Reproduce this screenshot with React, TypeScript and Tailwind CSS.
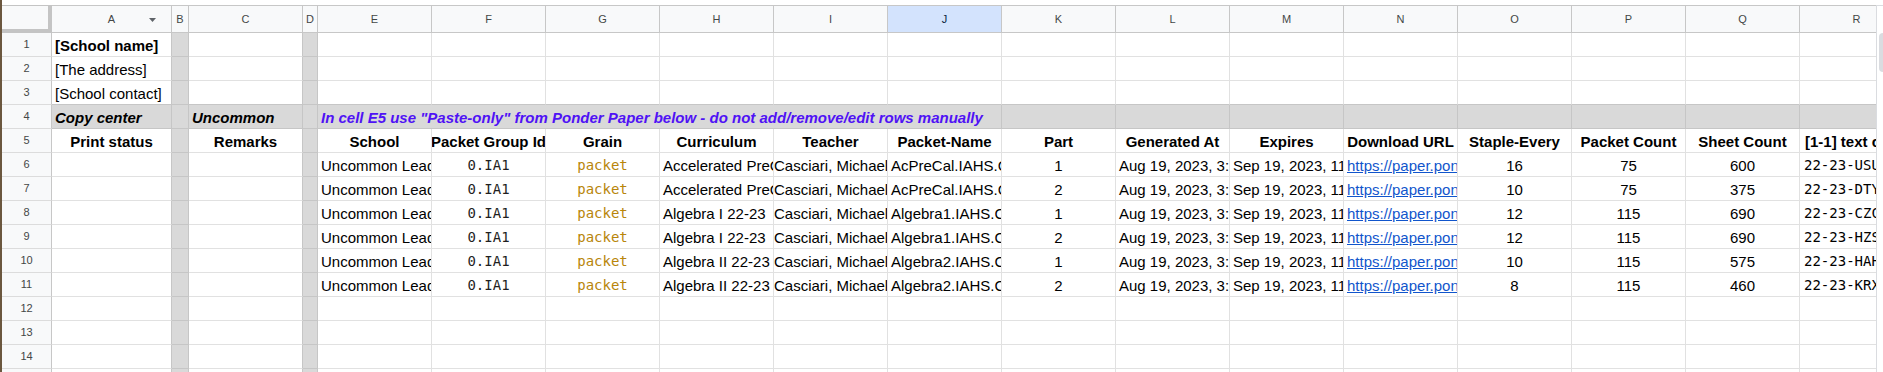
import React from "react";

type Col = { id: string; w: string; gray?: boolean; rb?: string };

const COLS: Col[] = [
  { id: "A", w: "w-[120px]", rb: "border-r-[#c6c6c6]" },
  { id: "B", w: "w-[17px]", gray: true },
  { id: "C", w: "w-[114px]", rb: "border-r-[#c6c6c6]" },
  { id: "D", w: "w-[15px]", gray: true },
  ...["E", "F", "G", "H", "I", "J", "K", "L", "M", "N", "O", "P", "Q", "R"].map((id) => ({ id, w: "w-[114px]" })),
];

type Cell = { v: React.ReactNode; c?: string; center?: boolean; span?: number; w?: string; pl?: string };

const MONO = "font-['DejaVu_Sans_Mono',monospace] text-[14px]";

const head = (v: string): Cell => ({ v, center: true, c: "font-bold" });
const center = (v: string): Cell => ({ v, center: true });
const text = (v: string, pl?: string): Cell => ({ v, pl });

const DATA = [
  ["Accelerated PreCalculus 22-23", "AcPreCal.IAHS.Casciari.1", "1", "16", "75", "600", "22-23-USU7KQ"],
  ["Accelerated PreCalculus 22-23", "AcPreCal.IAHS.Casciari.2", "2", "10", "75", "375", "22-23-DTY4MB"],
  ["Algebra I 22-23", "Algebra1.IAHS.Casciari.1", "1", "12", "115", "690", "22-23-CZC9RT"],
  ["Algebra I 22-23", "Algebra1.IAHS.Casciari.2", "2", "12", "115", "690", "22-23-HZS2WP"],
  ["Algebra II 22-23", "Algebra2.IAHS.Casciari.1", "1", "10", "115", "575", "22-23-HAH8LN"],
  ["Algebra II 22-23", "Algebra2.IAHS.Casciari.2", "2", "8", "115", "460", "22-23-KRX5VD"],
];

const ROWS: Record<string, Cell>[] = [
  { A: { v: "[School name]", c: "font-bold" } },
  { A: text("[The address]") },
  { A: text("[School contact]") },
  {
    A: { v: "Copy center", c: "font-bold italic" },
    C: { v: "Uncommon", c: "font-bold italic" },
    E: {
      v: 'In cell E5 use "Paste-only" from Ponder Paper below - do not add/remove/edit rows manually',
      c: "font-bold italic text-[#4f12f5]",
      span: 6,
      w: "w-[684px]",
    },
  },
  {
    A: head("Print status"),
    C: head("Remarks"),
    E: head("School"),
    F: head("Packet Group Id"),
    G: head("Grain"),
    H: head("Curriculum"),
    I: head("Teacher"),
    J: head("Packet-Name"),
    K: head("Part"),
    L: head("Generated At"),
    M: head("Expires"),
    N: head("Download URL"),
    O: head("Staple-Every"),
    P: head("Packet Count"),
    Q: head("Sheet Count"),
    R: { v: "[1-1] text content", c: "font-bold", pl: "pl-[5px]" },
  },
  ...DATA.map(([cur, name, part, staple, packets, sheets, code]) => ({
    E: text("Uncommon Leadership Charter High School"),
    F: { v: "0.IA1", center: true, c: `${MONO} text-[#1f1f1f]` },
    G: { v: "packet", center: true, c: `${MONO} text-[#b8860b]` },
    H: text(cur),
    I: text("Casciari, Michael", "pl-0"),
    J: text(name),
    K: center(part),
    L: text("Aug 19, 2023, 3:27:41 PM"),
    M: text("Sep 19, 2023, 11:59:59 PM"),
    N: { v: "https://paper.ponder.org/download/" + name, c: "text-[#1155cc] underline" },
    O: center(staple),
    P: center(packets),
    Q: center(sheets),
    R: { v: code, c: MONO, pl: "pl-[4px]" },
  })),
  {},
  {},
  {},
  {},
];

function ColumnHeader() {
  return (
    <div className="flex h-[28px] shrink-0">
      <div className="w-[50px] shrink-0 bg-[#f8f9fa] border-t border-r-4 border-b-4 border-[#c4c4c4]" />
      {COLS.map((col) => (
        <div
          key={col.id}
          className={`${col.w} relative shrink-0 flex items-center justify-center border-t border-b border-r border-[#c7c7c7] text-[11px] ${
            col.id === "J" ? "bg-[#d3e3fd] text-[#0b1f3f]" : "bg-[#f8f9fa] text-[#444746]"
          }`}
        >
          {col.id}
          {col.id === "A" && (
            <svg className="absolute right-[15px] top-[12px]" width="7" height="4" viewBox="0 0 7 4">
              <path d="M0 0h7L3.5 4z" fill="#5f6368" />
            </svg>
          )}
        </div>
      ))}
    </div>
  );
}

function Row({ n, cells }: { n: number; cells: Record<string, Cell> }) {
  const grayRow = n === 4;
  const out: React.ReactNode[] = [];
  for (let i = 0; i < COLS.length; i++) {
    const col = COLS[i];
    const cell = cells[col.id];
    if (cell?.span) i += cell.span - 1;
    const gray = grayRow || col.gray;
    const bottom = gray || n === 3 ? "border-b-[#c6c6c6]" : "border-b-[#e1e1e1]";
    const right = gray ? "border-r-[#c6c6c6]" : col.rb ?? "border-r-[#e1e1e1]";
    out.push(
      <div
        key={col.id}
        className={`${cell?.w ?? col.w} shrink-0 h-full flex items-end overflow-hidden whitespace-nowrap border-r border-b pb-[2px] ${right} ${bottom} ${
          gray ? "bg-[#d9d9d9]" : "bg-white"
        } ${cell?.center ? "justify-center" : cell?.pl ?? "pl-[3px]"}`}
      >
        {cell && <span className={`leading-[17px] ${cell.c ?? ""}`}>{cell.v}</span>}
      </div>
    );
  }
  return (
    <div className="flex h-[24px] shrink-0 text-[15px] text-black">
      <div className="w-[50px] shrink-0 flex items-center justify-center bg-[#f8f9fa] border-r border-b border-r-[#c7c7c7] border-b-[#dcdcdc] text-[11px] text-[#444746]">
        {n}
      </div>
      {out}
    </div>
  );
}

export default function App() {
  return (
    <div className="w-[1883px] h-[372px] overflow-hidden bg-white flex font-['Liberation_Sans',Arial,sans-serif]">
      <div className="w-[2px] shrink-0 bg-[#6b573f]" />
      <div className="w-[1874px] shrink-0 flex flex-col pt-[5px] overflow-hidden">
        <ColumnHeader />
        {ROWS.map((cells, i) => (
          <Row key={i} n={i + 1} cells={cells} />
        ))}
      </div>
      {/* vertical scrollbar */}
      <div className="w-[7px] shrink-0 pt-[5px]">
        <div className="h-full border-l border-t border-[#dadce0] pt-[27px] pl-[2px]">
          <div className="h-[39px] w-[8px] rounded-[4px] bg-[#dadce0]" />
        </div>
      </div>
    </div>
  );
}
